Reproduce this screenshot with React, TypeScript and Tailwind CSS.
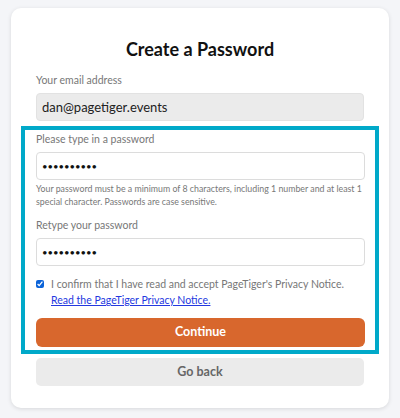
import React, { useState } from "react";

const font = { fontFamily: 'Lato, "Noto Sans", Arial, sans-serif' };

function Field({
  label,
  value,
  type = "password",
  readOnly,
}: {
  label: string;
  value: string;
  type?: string;
  readOnly?: boolean;
}) {
  return (
    <div>
      <label className="block text-[10.5px] leading-[18px] text-[#777] mb-[4px]">
        {label}
      </label>
      <input
        type={type}
        defaultValue={value}
        readOnly={readOnly}
        className={
          readOnly
            ? "block w-full h-[28px] rounded-[4px] bg-[#ebebeb] border border-[#e2e2e2] px-[5px] text-[13px] text-[#222] outline-none"
            : "block w-full h-[28px] rounded-[4px] bg-white border border-[#dcdcdc] px-[5px] text-[9.5px] text-[#111] outline-none"
        }
      />
    </div>
  );
}

export default function App() {
  const [agree, setAgree] = useState(true);

  return (
    <div className="min-h-[418px] bg-[#f4f5f8] pt-[8px] pb-[10px]" style={font}>
      <div className="mx-[11px] bg-white rounded-[10px] shadow-[0_1px_4px_rgba(0,0,0,0.12)] px-[25px] pt-[27px] pb-[22px]">
        <h1 className="text-center text-[18px] leading-[28px] font-bold text-[#111] mb-[8px]">
          Create a Password
        </h1>

        <Field label="Your email address" value="dan@pagetiger.events" type="text" readOnly />

        <div className="-mx-[15px] mt-[5px] border-[4px] border-[#00a9c9] pl-[11px] pr-[10px] pt-0 pb-[3px]">
          <Field label="Please type in a password" value="pagetiger1" />
          <p className="mt-[2px] text-[8.8px] leading-[13px] text-[#777]">
            Your password must be a minimum of 8 characters, including 1 number and at least 1
            special character. Passwords are case sensitive.
          </p>

          <div className="mt-[8px]">
            <Field label="Retype your password" value="pagetiger1" />
          </div>

          <div className="mt-[10px] flex gap-[7px]">
            <input
              type="checkbox"
              checked={agree}
              onChange={(e) => setAgree(e.target.checked)}
              className="mt-[4px] w-[8px] h-[8px] shrink-0 accent-[#0b63d8]"
            />
            <div className="text-[10.5px] leading-[16px] text-[#777]">
              <div>I confirm that I have read and accept PageTiger's Privacy Notice.</div>
              <a href="#" className="text-[#2438e0] underline">
                Read the PageTiger Privacy Notice.
              </a>
            </div>
          </div>

          <button className="mt-[10px] w-full h-[29px] rounded-[6px] bg-[#d8672d] text-white text-[12.5px] font-bold">
            Continue
          </button>
        </div>

        <button className="mt-[4px] w-full h-[28px] rounded-[5px] bg-[#ebebeb] text-[#666] text-[12.5px] font-bold">
          Go back
        </button>
      </div>
    </div>
  );
}
